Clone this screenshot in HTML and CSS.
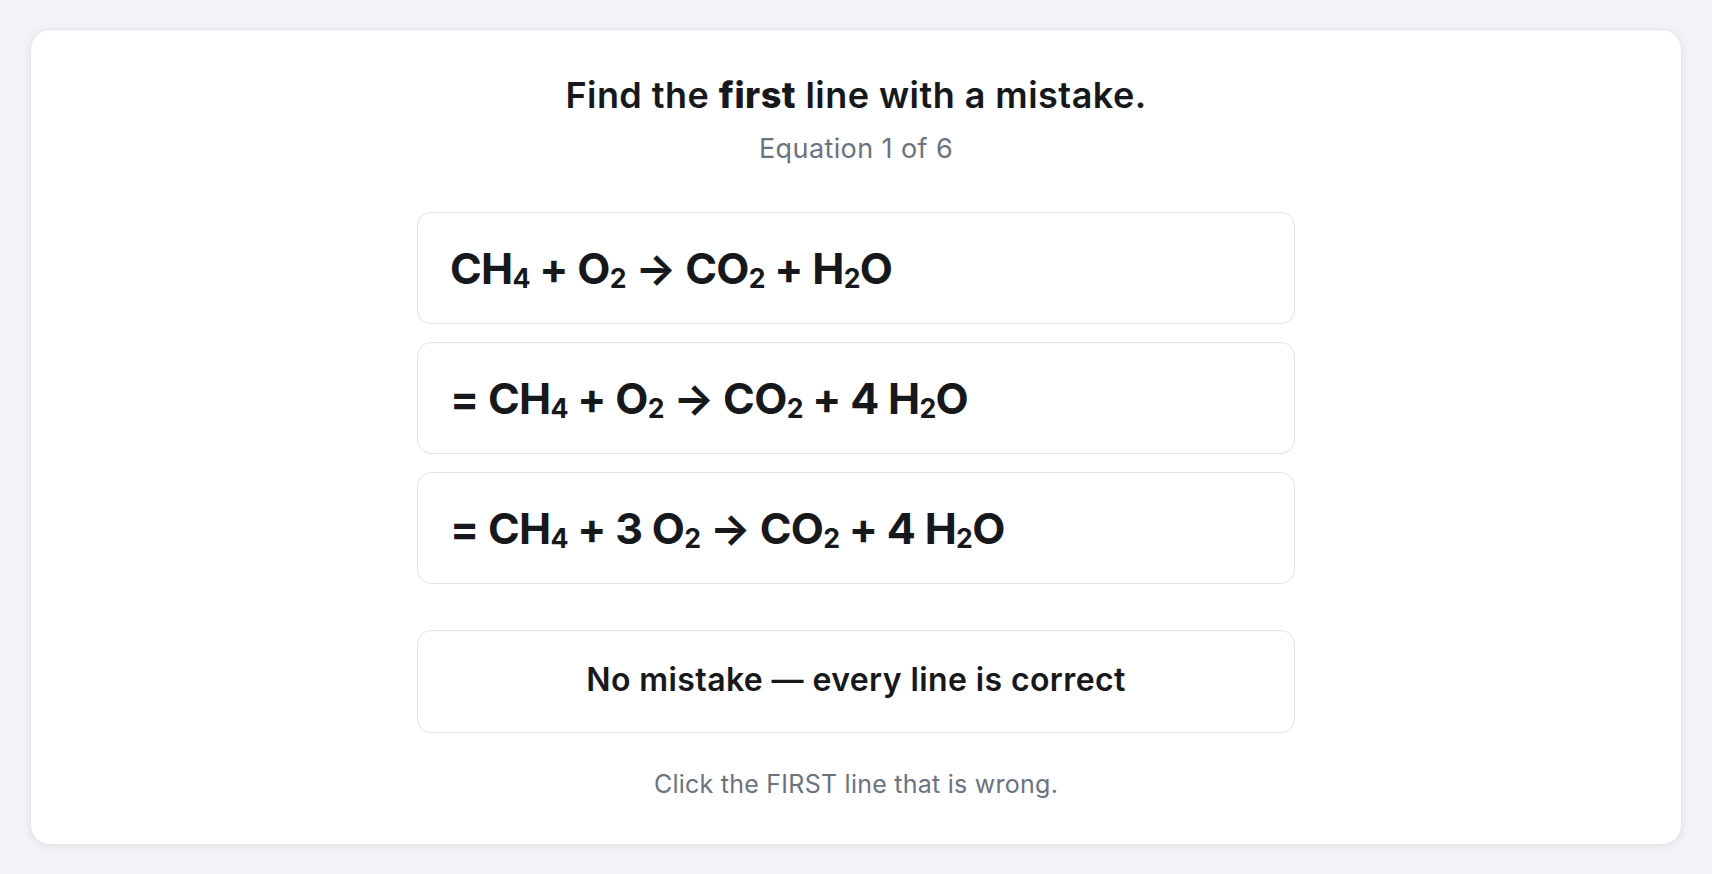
FILE: index.html
```html
<!DOCTYPE html>
<html lang="en">
<head>
<meta charset="utf-8">
<title>Find the first line with a mistake</title>
<link rel="stylesheet" href="styles.css">
</head>
<body>
<main class="card">
  <h1 class="title">Find the <strong>first</strong> line with a mistake.</h1>
  <p class="subtitle">Equation 1 of 6</p>
  <div class="lines">
    <button class="line">CH<sub>4</sub> + O<sub>2</sub> → CO<sub>2</sub> + H<sub>2</sub>O</button>
    <button class="line">= CH<sub>4</sub> + O<sub>2</sub> → CO<sub>2</sub> + 4 H<sub>2</sub>O</button>
    <button class="line">= CH<sub>4</sub> + 3 O<sub>2</sub> → CO<sub>2</sub> + 4 H<sub>2</sub>O</button>
  </div>
  <button class="none">No mistake — every line is correct</button>
  <p class="hint">Click the FIRST line that is wrong.</p>
</main>
</body>
</html>
```
FILE: styles.css
```css
* { box-sizing: border-box; }
html, body { margin: 0; height: 100%; }
body {
  background: #f3f4f7;
  padding: 29px 30px 29px;
  font-family: Inter, "Noto Sans", sans-serif;
  color: #16181c;
}
.card {
  height: 100%;
  background: #fff;
  border: 1px solid #e3e5ea;
  border-radius: 20px;
  box-shadow: 0 2px 10px rgba(20, 30, 50, 0.08);
  display: flex;
  flex-direction: column;
  align-items: center;
  padding-top: 45px;
}
.title {
  margin: 0;
  font-size: 36px;
  line-height: 40px;
  font-weight: 600;
  letter-spacing: 0.45px;
}
.title strong { font-weight: 800; }
.subtitle {
  margin: 20px 0 0;
  font-size: 27px;
  line-height: 28px;
  letter-spacing: 0.4px;
  color: #6b7280;
}
.lines {
  margin-top: 49px;
  width: 878px;
  display: flex;
  flex-direction: column;
  gap: 18px;
}
.line, .none {
  font-family: inherit;
  background: #fff;
  border: 1.5px solid #dfe2e7;
  border-radius: 14px;
  color: #16181c;
  cursor: pointer;
}
.line {
  display: block;
  width: 100%;
  text-align: left;
  padding: 28px 32px;
  font-size: 43px;
  line-height: 54px;
  font-weight: 700;
  letter-spacing: -0.7px;
}
.line sub {
  font-size: 0.62em;
  line-height: 0;
  vertical-align: -0.16em;
}
.none {
  margin-top: 46px;
  width: 878px;
  padding: 31px 20px 34px;
  font-size: 32px;
  line-height: 36px;
  font-weight: 600;
  letter-spacing: 0.4px;
}
.hint {
  margin: 37px 0 0;
  font-size: 25px;
  line-height: 28px;
  letter-spacing: 0.25px;
  color: #6b7280;
}
```
